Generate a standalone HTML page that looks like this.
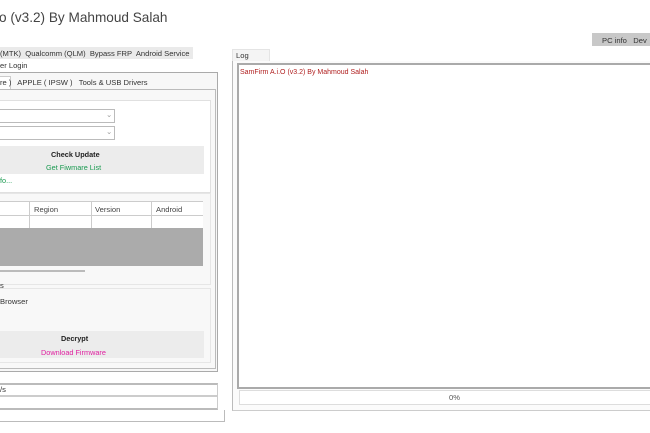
<!DOCTYPE html><html><head><style>
body{margin:0;width:650px;height:433px;background:#fff;position:relative;overflow:hidden;font-family:"Liberation Sans",sans-serif;font-size:7.6px;color:#222}
.a{position:absolute}
.b{position:absolute;box-sizing:border-box}
</style></head><body>
<div class="a" style="left:-1px;top:10px;font-size:13.6px;color:#444">o (v3.2) By Mahmoud Salah</div>
<div class="b" style="left:592px;top:33px;width:60px;height:13px;background:#c8c8c8"></div>
<div class="a" style="left:602px;top:36px;color:#333">PC info&nbsp;&nbsp;&nbsp;Dev</div>
<div class="b" style="left:0;top:47px;width:193px;height:12px;background:#eaeaea"></div>
<div class="a" style="left:0;top:49px;color:#333">(MTK)&nbsp; Qualcomm (QLM)&nbsp; Bypass FRP&nbsp; Android Service</div>
<div class="a" style="left:0;top:61px;color:#333">er Login</div>
<div class="b" style="left:0;top:72px;width:218px;height:300px;border:1px solid #aaa;border-left:0;background:#f7f7f7"></div>
<div class="b" style="left:0;top:76px;width:11px;height:13px;background:#fff;border:1px solid #ccc;border-left:0;border-bottom:0"></div>
<div class="a" style="left:0;top:78px;color:#333">re )&nbsp;&nbsp; APPLE ( IPSW )&nbsp;&nbsp; Tools &amp; USB Drivers</div>
<div class="b" style="left:0;top:89px;width:216px;height:280px;border:1px solid #bbb;border-left:0;background:#f8f8f8"></div>
<div class="b" style="left:0;top:100px;width:211px;height:93px;border:1px solid #e0e0e0;border-left:0;background:#fff"></div>
<div class="b" style="left:0;top:109px;width:115px;height:14px;border:1px solid #bbb;border-left:0;background:#fff"></div>
<div class="a" style="left:106px;top:110px;color:#999">⌄</div>
<div class="b" style="left:0;top:126px;width:115px;height:14px;border:1px solid #bbb;border-left:0;background:#fff"></div>
<div class="a" style="left:106px;top:127px;color:#999">⌄</div>
<div class="b" style="left:0;top:146px;width:204px;height:28px;background:#ececec"></div>
<div class="a" style="left:51px;top:150px;font-weight:bold;font-size:7.3px">Check Update</div>
<div class="a" style="left:46px;top:163px;color:#1a9a50;font-size:7.3px">Get Fiwmare List</div>
<div class="a" style="left:0;top:176px;color:#1a9a50;font-size:7.3px">fo...</div>
<div class="b" style="left:0;top:193px;width:211px;height:92px;border:1px solid #e6e6e6;border-left:0;background:#f8f8f8"></div>
<div class="b" style="left:0;top:201px;width:203px;height:27px;background:#fff;border-top:1px solid #ccc"></div>
<div class="b" style="left:0;top:215px;width:203px;height:1px;background:#ccc"></div>
<div class="b" style="left:29px;top:201px;width:1px;height:27px;background:#ccc"></div>
<div class="b" style="left:91px;top:201px;width:1px;height:27px;background:#ccc"></div>
<div class="b" style="left:151px;top:201px;width:1px;height:27px;background:#ccc"></div>
<div class="a" style="left:34px;top:205px;color:#444">Region</div>
<div class="a" style="left:95px;top:205px;color:#444">Version</div>
<div class="a" style="left:156px;top:205px;color:#444">Android</div>
<div class="b" style="left:0;top:228px;width:203px;height:38px;background:#ababab"></div>
<div class="b" style="left:0;top:270px;width:85px;height:2px;background:#bbb"></div>
<div class="a" style="left:0;top:281px;color:#333">s</div>
<div class="b" style="left:0;top:288px;width:211px;height:75px;border:1px solid #e6e6e6;border-left:0;background:#f8f8f8"></div>
<div class="a" style="left:0;top:297px;color:#333">Browser</div>
<div class="b" style="left:0;top:331px;width:204px;height:27px;background:#ececec"></div>
<div class="a" style="left:61px;top:334px;font-weight:bold;font-size:7.3px">Decrypt</div>
<div class="a" style="left:41px;top:348px;color:#e020a0;font-size:7.3px">Download Firmware</div>
<div class="b" style="left:0;top:383px;width:218px;height:13px;border-top:2px solid #bbb;border-bottom:1px solid #ccc;border-right:1px solid #ccc;background:#fff"></div>
<div class="a" style="left:0;top:385px;color:#333">/s</div>
<div class="b" style="left:0;top:396px;width:218px;height:14px;border-top:1px solid #ccc;border-bottom:2px solid #bbb;border-right:1px solid #ccc;background:#fff"></div>
<div class="b" style="left:0;top:410px;width:225px;height:12px;border-right:1px solid #bbb;border-bottom:1px solid #bbb"></div>
<div class="b" style="left:232px;top:49px;width:38px;height:13px;background:#f4f4f4;border:1px solid #e4e4e4"></div>
<div class="a" style="left:236px;top:51px;color:#333">Log</div>
<div class="b" style="left:232px;top:61px;width:420px;height:350px;border-left:1px solid #bbb;border-bottom:1px solid #ccc;background:#fbfbfb"></div>
<div class="b" style="left:237px;top:63px;width:415px;height:326px;border:2px solid #aaa;border-right:0;background:#fff"></div>
<div class="a" style="left:240px;top:69px;color:#b02020;font-size:7px">SamFirm A.i.O (v3.2) By Mahmoud Salah</div>
<div class="b" style="left:239px;top:390px;width:413px;height:15px;border:1px solid #ddd;border-right:0;background:#fff"></div>
<div class="a" style="left:449px;top:393px;color:#555">0%</div>
</body></html>
